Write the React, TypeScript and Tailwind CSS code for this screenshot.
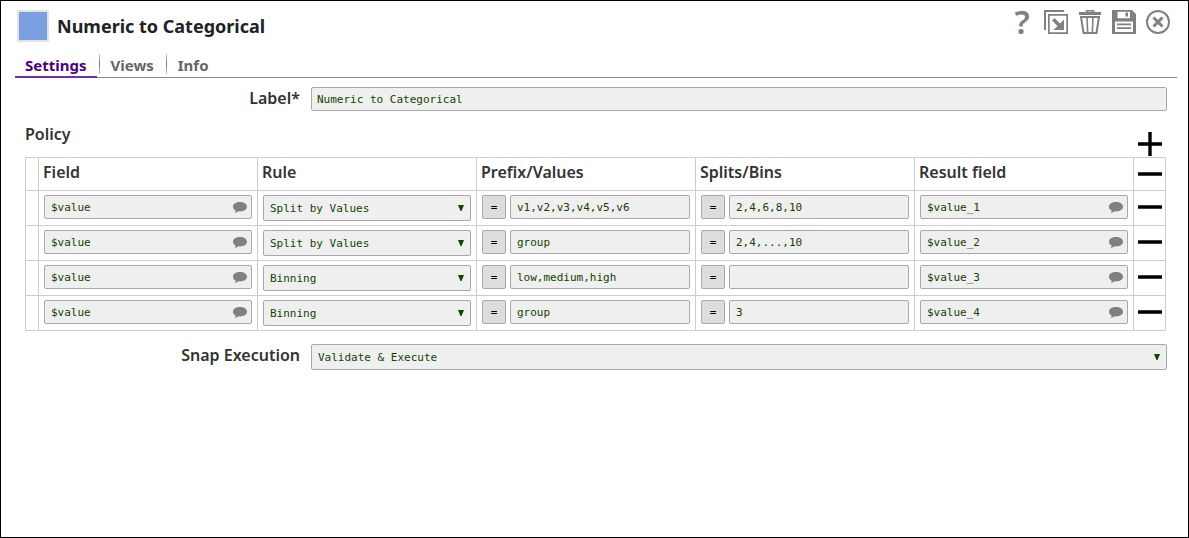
import { useState } from "react";

interface PolicyRow {
  field: string;
  rule: string;
  prefix: string;
  splits: string;
  result: string;
}

const INITIAL_ROWS: PolicyRow[] = [
  { field: "$value", rule: "Split by Values", prefix: "v1,v2,v3,v4,v5,v6", splits: "2,4,6,8,10", result: "$value_1" },
  { field: "$value", rule: "Split by Values", prefix: "group", splits: "2,4,...,10", result: "$value_2" },
  { field: "$value", rule: "Binning", prefix: "low,medium,high", splits: "", result: "$value_3" },
  { field: "$value", rule: "Binning", prefix: "group", splits: "3", result: "$value_4" },
];

const RULES = ["Split by Values", "Binning"];
const EXECUTION_MODES = ["Validate & Execute", "Execute only", "Disabled"];
const TABS = ["Settings", "Views", "Info"];

const MONO = "font-['DejaVu_Sans_Mono','Liberation_Mono',monospace] text-[11px] text-[#114400]";
const BOX = "w-full min-w-0 rounded-xs border border-[#a9a9a9] bg-[#efefef] outline-none focus:border-[#4b0082]";

export default function App() {
  const [tab, setTab] = useState("Settings");
  const [label, setLabel] = useState("Numeric to Categorical");
  const [execution, setExecution] = useState(EXECUTION_MODES[0]);
  const [rows, setRows] = useState(INITIAL_ROWS);

  const updateRow = (index: number, patch: Partial<PolicyRow>) =>
    setRows((r) => r.map((row, i) => (i === index ? { ...row, ...patch } : row)));
  const removeRow = (index: number) => setRows((r) => r.filter((_, i) => i !== index));
  const addRow = () => setRows((r) => [...r, { field: "", rule: RULES[0], prefix: "", splits: "", result: "" }]);

  return (
    <div className="min-h-screen border border-black bg-white font-['Noto_Sans','Open_Sans',sans-serif] text-[#333]">
      <header className="flex items-start justify-between pt-[9px] pr-[18px] pl-4">
        <div className="flex items-center gap-2">
          <span className="size-8 border-2 border-[#e3e3e3] bg-[#7a9fe2]" />
          <h1 className="text-lg leading-8 font-bold text-[#222]">Numeric to Categorical</h1>
        </div>
        <Toolbar />
      </header>

      <nav className="mt-3 mr-[11px] ml-[14px] flex border-b border-[#888]">
        {TABS.map((name, i) => (
          <div key={name} className="flex items-start">
            {i > 0 && <span className="mr-px ml-[2px] h-5 w-px bg-linear-to-b from-[#ccc] via-[#777] to-[#ccc]" />}
            <button
              onClick={() => setTab(name)}
              className={`-mb-px h-6 border-b-2 px-[10px] text-[15px] leading-5 font-bold ${
                tab === name ? "border-[#7030a8] text-[#4b0082]" : "border-transparent text-[#666]"
              }`}
            >
              {name}
            </button>
          </div>
        ))}
      </nav>

      <main className="pr-[21px] pl-6">
        <div className="mt-[9px] flex items-start gap-[11px]">
          <label htmlFor="label" className="w-[275px] shrink-0 text-right text-base leading-[22px] font-semibold">
            Label*
          </label>
          <input
            id="label"
            value={label}
            onChange={(e) => setLabel(e.target.value)}
            className={`h-6 px-[5px] ${BOX} ${MONO}`}
          />
        </div>

        <div className="mt-3 flex items-start justify-between pr-[5px]">
          <h2 className="text-base leading-[22px] font-semibold">Policy</h2>
          <button onClick={addRow} aria-label="Add row" className="mt-2 h-[26px]">
            <PlusIcon />
          </button>
        </div>

        <div className="pr-px">
          <table className="w-full table-fixed border-collapse">
            <colgroup>
              <col className="w-[13px]" />
              <col />
              <col />
              <col />
              <col />
              <col />
              <col className="w-8" />
            </colgroup>
            <thead>
              <tr className="h-[33px]">
                <th className="border border-[#ccc]" />
                <HeadCell>Field</HeadCell>
                <HeadCell>Rule</HeadCell>
                <HeadCell>Prefix/Values</HeadCell>
                <HeadCell>Splits/Bins</HeadCell>
                <HeadCell>Result field</HeadCell>
                <th className="border border-[#ccc] p-0 align-middle">
                  <RemoveButton title="Remove all rows" onClick={() => setRows([])} />
                </th>
              </tr>
            </thead>
            <tbody>
              {rows.map((row, i) => (
                <tr key={i} className="h-[35px]">
                  <td className="border border-[#ccc]" />
                  <Cell>
                    <SuggestInput name="Field" value={row.field} onChange={(field) => updateRow(i, { field })} />
                  </Cell>
                  <Cell>
                    <Select name="Rule" value={row.rule} options={RULES} onChange={(rule) => updateRow(i, { rule })} />
                  </Cell>
                  <Cell>
                    <ExpressionInput name="Prefix/Values" value={row.prefix} onChange={(prefix) => updateRow(i, { prefix })} />
                  </Cell>
                  <Cell>
                    <ExpressionInput name="Splits/Bins" value={row.splits} onChange={(splits) => updateRow(i, { splits })} />
                  </Cell>
                  <Cell>
                    <SuggestInput name="Result field" value={row.result} onChange={(result) => updateRow(i, { result })} />
                  </Cell>
                  <td className="border border-[#ccc] px-0 py-1 align-top">
                    <RemoveButton title="Remove row" onClick={() => removeRow(i)} />
                  </td>
                </tr>
              ))}
            </tbody>
          </table>
        </div>

        <div className="mt-[13px] flex items-start gap-[11px]">
          <label htmlFor="execution" className="w-[275px] shrink-0 text-right text-base leading-[22px] font-semibold">
            Snap Execution
          </label>
          <Select id="execution" name="Snap Execution" value={execution} options={EXECUTION_MODES} onChange={setExecution} />
        </div>
      </main>
    </div>
  );
}

function HeadCell({ children }: { children: React.ReactNode }) {
  return (
    <th className="border border-[#ccc] px-1 pb-1 text-left align-middle text-base leading-6 font-semibold">{children}</th>
  );
}

function Cell({ children }: { children: React.ReactNode }) {
  return <td className="border border-[#ccc] px-[5px] py-1 align-top">{children}</td>;
}

interface ControlProps {
  name: string;
  value: string;
  onChange: (value: string) => void;
}

function SuggestInput({ name, value, onChange }: ControlProps) {
  return (
    <div className="relative flex">
      <input
        aria-label={name}
        value={value}
        onChange={(e) => onChange(e.target.value)}
        className={`h-6 pr-6 pl-[6px] ${BOX} ${MONO}`}
      />
      <svg viewBox="0 0 14 11" className="pointer-events-none absolute top-[7px] right-[5px] h-[11px] w-[14px] fill-[#808080]">
        <path d="M7 0C3 0 0 2 0 4.7c0 1.7 1 3 2.700 3.900C2.700 9.600 2.300 10.400 1.800 11c1.500-.2 2.800-.8 3.700-1.700.5.1 1 .1 1.500.1 4 0 7-2 7-4.700S11 0 7 0z" />
      </svg>
    </div>
  );
}

function ExpressionInput({ name, value, onChange }: ControlProps) {
  const [enabled, setEnabled] = useState(false);

  return (
    <div className="flex gap-1">
      <button
        aria-label={`${name} expression`}
        aria-pressed={enabled}
        onClick={() => setEnabled(!enabled)}
        className="h-6 w-6 shrink-0 rounded-xs border border-[#a9a9a9] bg-[#ddd] pt-[2px] font-['DejaVu_Sans_Mono','Liberation_Mono',monospace] text-[11px] text-black"
      >
        =
      </button>
      <input
        aria-label={name}
        value={value}
        onChange={(e) => onChange(e.target.value)}
        className={`h-6 px-[6px] ${BOX} ${MONO}`}
      />
    </div>
  );
}

function Select({ id, name, value, options, onChange }: ControlProps & { id?: string; options: string[] }) {
  return (
    <div className="relative flex min-w-0 flex-1">
      <select
        id={id}
        aria-label={name}
        value={value}
        onChange={(e) => onChange(e.target.value)}
        className={`h-[26px] appearance-none pt-[2px] pr-5 pl-[6px] ${BOX} ${MONO}`}
      >
        {options.map((o) => (
          <option key={o}>{o}</option>
        ))}
      </select>
      <svg viewBox="0 0 6 6" className="pointer-events-none absolute top-[10px] right-[7px] size-[6px] fill-[#114400]">
        <path d="M0 0h6L3.500 6h-1z" />
      </svg>
    </div>
  );
}

function RemoveButton({ title, onClick }: { title: string; onClick: () => void }) {
  return (
    <button aria-label={title} onClick={onClick} className="mx-auto flex h-6 w-6 items-center">
      <svg viewBox="0 0 24 4" className="h-1 w-6">
        <rect y=".3" width="24" height="3.400" rx=".5" />
      </svg>
    </button>
  );
}

function PlusIcon() {
  return (
    <svg viewBox="0 0 24 24" className="size-6">
      <path d="M0 10.300h24v3.400H0zM10.300 0h3.400v24h-3.400z" />
    </svg>
  );
}

function Toolbar() {
  return (
    <div className="flex gap-[10px] text-[#808080]">
      <button aria-label="Help" className="flex size-6 items-center justify-center text-[33px] leading-6 font-semibold">
        ?
      </button>
      <button aria-label="Copy" className="size-6">
        <svg viewBox="0 0 24 24" className="size-6" fill="currentColor">
          <path d="M0 0h20v2H2v18H0z" />
          <path fillRule="evenodd" d="M4 4h20v20H4zM5.700 5.700v16.600h16.600V5.700z" />
          <path d="M8 10.500L10.500 8l5.500 5.500L20 9.500V20H9.500l4-4z" />
        </svg>
      </button>
      <button aria-label="Delete" className="size-6">
        <svg viewBox="0 0 24 24" className="size-6" fill="none" stroke="currentColor">
          <path d="M1 3.500h22" strokeWidth="3" />
          <path d="M8.500 2V.8h7V2" strokeWidth="1.500" />
          <path d="M3 7h18l-2.500 16h-13z" strokeWidth="2" />
          <path d="M9 7l.7 16M15 7l-.7 16" strokeWidth="1.600" />
        </svg>
      </button>
      <button aria-label="Save" className="size-6">
        <svg viewBox="0 0 24 24" className="size-6" fill="currentColor">
          <path fillRule="evenodd" d="M0 0h20l4 4v20H0zM5.500 1.800v6.400h12.500V1.800zM3 11.500V22h18V11.500z" />
          <path d="M13.500 2.500h2.500v4h-2.500zM5 13.500h14v1.700H5zM5 17.300h14V19H5z" />
        </svg>
      </button>
      <button aria-label="Close" className="size-6">
        <svg viewBox="0 0 24 24" className="size-6" fill="none" stroke="currentColor">
          <circle cx="12" cy="12" r="11" strokeWidth="2" />
          <path d="M7.500 7.500l9 9M16.500 7.500l-9 9" strokeWidth="3" />
        </svg>
      </button>
    </div>
  );
}
